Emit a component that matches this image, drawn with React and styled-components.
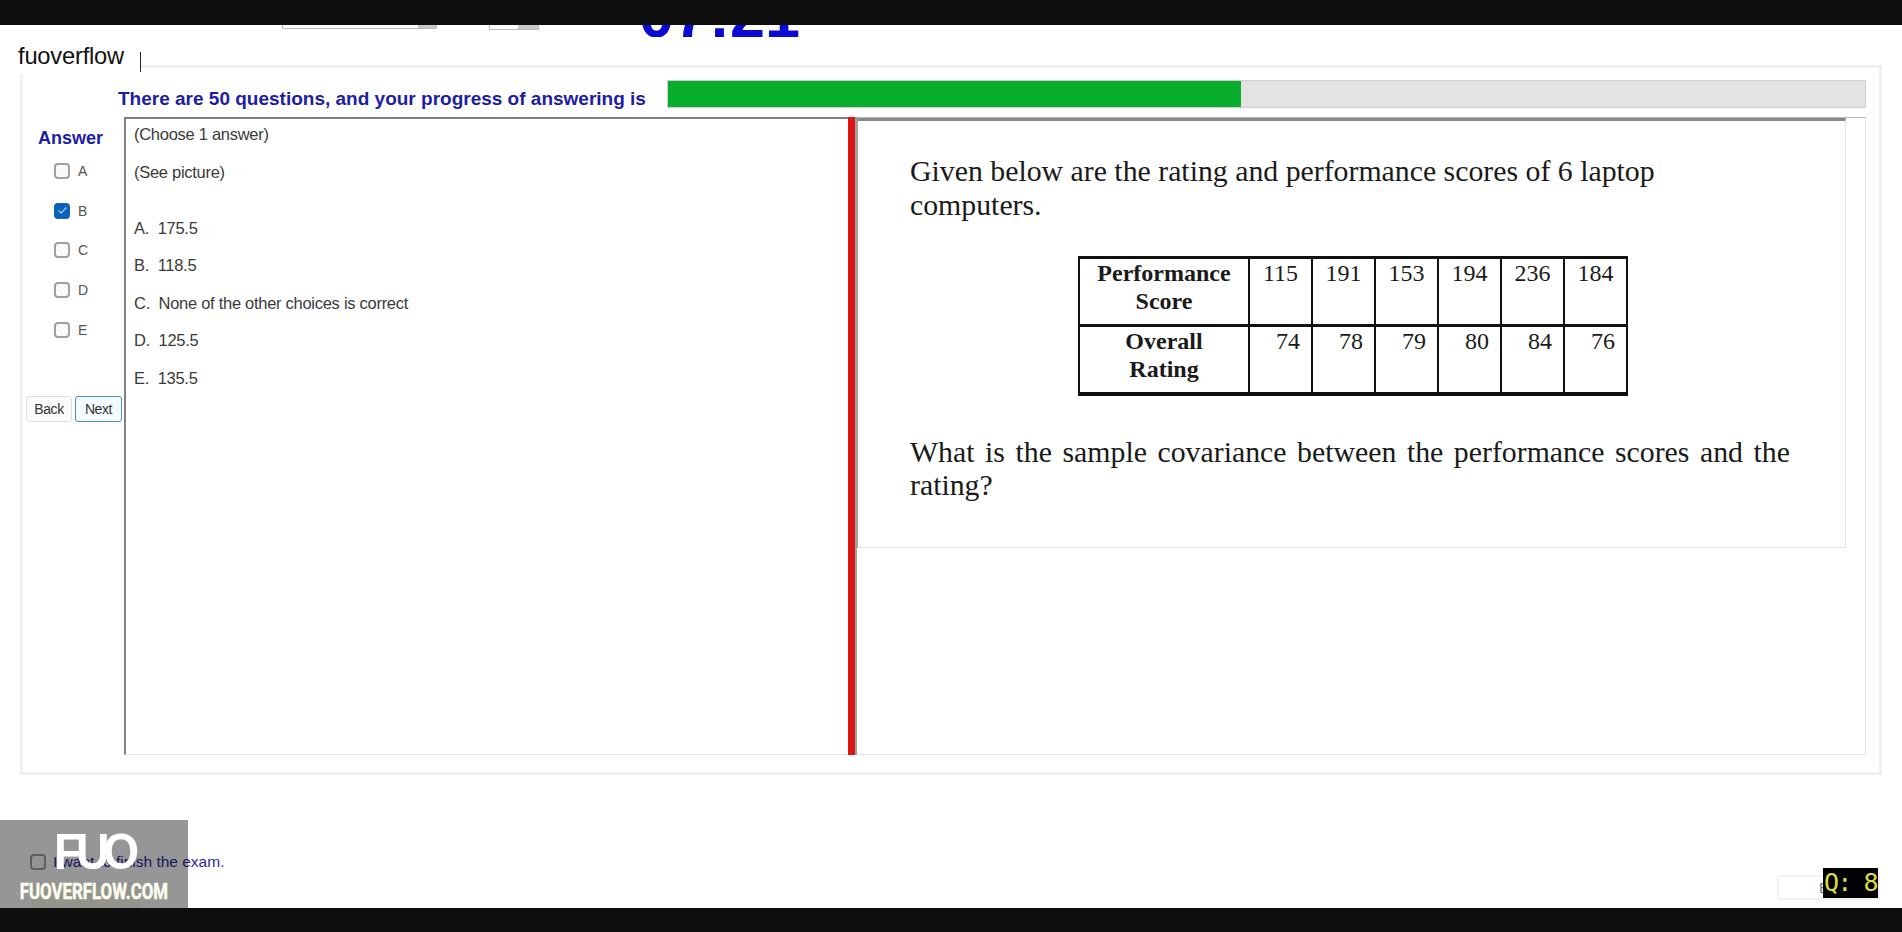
import styled, { createGlobalStyle } from "styled-components";

const Global = createGlobalStyle`
  html, body { margin: 0; padding: 0; background: #fff; }
  body { font-family: "Liberation Sans", Arial, sans-serif; }
`;

const Page = styled.div`
  position: relative;
  width: 1902px;
  height: 932px;
  overflow: hidden;
  display: flex;
  flex-direction: column;
  background: #fff;
`;

const BlackBar = styled.div`
  height: ${(p) => p.$h}px;
  background: #0e0e0e;
  flex-shrink: 0;
`;

const Header = styled.div`
  height: 40px;
  flex-shrink: 0;
  display: flex;
  align-items: flex-start;
  padding-left: 282px;
`;

const ClippedBox = styled.div`
  width: ${(p) => p.$w}px;
  height: ${(p) => p.$h}px;
  margin-right: ${(p) => p.$mr}px;
  box-sizing: border-box;
  border: 1px solid #bbb;
  border-top: none;
  display: flex;
  justify-content: flex-end;
`;

const ClippedArrow = styled.div`
  width: ${(p) => p.$w}px;
  height: 100%;
  background: #c9c9c9;
`;

const Timer = styled.div`
  height: 12px;
  display: flex;
  align-items: flex-end;
  overflow: hidden;
  font-size: 63px;
  line-height: 44px;
  font-weight: 700;
  color: #0a0ad2;
`;

const Frame = styled.div`
  width: 1862px;
  height: 710px;
  margin-left: 20px;
  box-sizing: border-box;
  border: 3px solid #f0f0f0;
  padding: 12px 13px 17px 0;
  display: flex;
  flex-direction: column;
  flex-shrink: 0;
`;

const ProgressRow = styled.div`
  height: 28px;
  display: flex;
  align-items: center;
  padding-left: 95px;
  margin-bottom: 9px;
`;

const ProgressLabel = styled.div`
  width: 549px;
  padding-top: 9px;
  font-size: 19px;
  font-weight: 700;
  color: #1c1ca6;
  white-space: nowrap;
`;

const ProgressTrack = styled.div`
  flex: 1;
  height: 28px;
  background: #e3e3e3;
  border: 1px solid #cfcfcf;
  box-sizing: border-box;
`;

const ProgressFill = styled.div`
  height: 100%;
  background: #08ae2c;
`;

const Body = styled.div`
  flex: 1;
  display: flex;
  min-height: 0;
`;

const AnswerColumn = styled.div`
  width: 101px;
  flex-shrink: 0;
  display: flex;
  flex-direction: column;
  padding-left: 3px;
  box-sizing: border-box;
`;

const AnswerTitle = styled.div`
  font-size: 18px;
  font-weight: 700;
  color: #1c1ca6;
  margin: 11px 0 0 12px;
  height: 35px;
  line-height: 20px;
`;

const Options = styled.div`
  display: flex;
  flex-direction: column;
  gap: 23.7px;
  margin-left: 28px;
`;

const Option = styled.div`
  display: flex;
  align-items: center;
  height: 16px;
  gap: 8px;
  font-size: 14px;
  color: #555;
`;

const Box = styled.span`
  width: 16px;
  height: 16px;
  box-sizing: border-box;
  border-radius: 4px;
  border: ${(p) => (p.$checked ? "none" : "2px solid #a0a0a0")};
  background: ${(p) => (p.$checked ? "#0b62b8" : "#fafafa")};
  display: flex;
  align-items: center;
  justify-content: center;
  flex-shrink: 0;
`;

const NavButtons = styled.div`
  display: flex;
  gap: 3px;
  margin-top: 58px;
`;

const NavButton = styled.div`
  width: ${(p) => p.$w}px;
  height: 26px;
  box-sizing: border-box;
  border: 1px solid ${(p) => (p.$active ? "#4a8fbe" : "#ddd")};
  border-radius: 3px;
  background: ${(p) => (p.$active ? "#f4fafe" : "#fbfbfb")};
  display: flex;
  align-items: center;
  justify-content: center;
  font-size: 14px;
  letter-spacing: -0.4px;
  color: #333;
`;

const QuestionPane = styled.div`
  width: 724px;
  flex-shrink: 0;
  box-sizing: border-box;
  border-left: 2px solid #808080;
  border-top: 2px solid #808080;
  border-bottom: 1px solid #e4e4e4;
  padding: 3px 8px;
`;

const QuestionLine = styled.div`
  height: ${(p) => p.$h || 37.4}px;
  line-height: 24px;
  font-size: 16.5px;
  letter-spacing: -0.28px;
  color: #3a3a3a;
  white-space: pre;
`;

const Splitter = styled.div`
  width: 9px;
  flex-shrink: 0;
  background: #dd1414;
  border-right: 2px solid #a0a0a0;
  box-sizing: border-box;
`;

const PicturePane = styled.div`
  flex: 1;
  min-width: 0;
  border-top: 1px solid #b5b5b5;
  border-right: 1px solid #e4e4e4;
  border-bottom: 1px solid #e4e4e4;
  box-sizing: border-box;
`;

const Picture = styled.div`
  width: 989px;
  height: 430px;
  box-sizing: border-box;
  border-top: 3px solid #8a8a8a;
  border-left: 1px solid #a5a5a5;
  border-right: 1px solid #e4e4e4;
  border-bottom: 1px solid #e4e4e4;
  padding: 33px 0 0 52px;
  font-family: "Liberation Serif", "Times New Roman", serif;
  font-size: 29.8px;
  line-height: 33.5px;
  color: #1a1a1a;
`;

const Paragraph = styled.p`
  margin: 0;
  width: ${(p) => p.$w}px;
  text-align: ${(p) => (p.$justify ? "justify" : "left")};
`;

const ScoreTable = styled.table`
  border-collapse: collapse;
  margin: 35px 0 0 168px;
  table-layout: fixed;
  width: 548px;
  border-top: 3px solid #111;
  border-bottom: 4px solid #111;
  line-height: 28px;
`;

const Th = styled.th`
  width: 170px;
  height: 68px;
  padding: 0;
  box-sizing: border-box;
  border: 2px solid #111;
  border-top: ${(p) => (p.$first ? "none" : "3px solid #111")};
  border-bottom: none;
  font-size: 24px;
  font-weight: 700;
  vertical-align: top;
`;

const Td = styled.td`
  width: 63px;
  padding: 0 ${(p) => (p.$right ? 11 : 0)}px 0 0;
  box-sizing: border-box;
  border: 2px solid #111;
  border-top: ${(p) => (p.$first ? "none" : "3px solid #111")};
  border-bottom: none;
  font-size: 24px;
  text-align: ${(p) => (p.$right ? "right" : "center")};
  vertical-align: top;
`;

const Footer = styled.div`
  flex: 1;
  min-height: 0;
  display: flex;
  justify-content: space-between;
  align-items: flex-end;
  padding: 0 22px 8px 30px;
`;

const FinishColumn = styled.div`
  display: flex;
  flex-direction: column;
  gap: 12px;
  margin-bottom: -8px;
`;

const FinishRow = styled.div`
  display: flex;
  align-items: center;
  gap: 7px;
  font-size: 15.5px;
  color: #2a2a9c;
`;

const FinishButton = styled.div`
  width: 105px;
  height: 24px;
  margin-left: 2px;
  border: 1px solid #eee;
  border-bottom: none;
  background: #fbfbef;
  border-radius: 3px 3px 0 0;
`;

const ExitButton = styled.div`
  width: 103px;
  height: 25px;
  box-sizing: border-box;
  border: 2px solid #f2f2f2;
  border-radius: 4px;
  font-size: 15px;
  color: #777;
  display: flex;
  align-items: center;
  padding-left: 40px;
`;

const NameTag = styled.div`
  position: absolute;
  left: 18px;
  top: 42px;
  width: 123px;
  height: 32px;
  background: #fff;
  font-size: 23.7px;
  line-height: 28px;
  letter-spacing: -0.2px;
  color: #111;
  white-space: nowrap;
`;

const Caret = styled.span`
  position: absolute;
  left: 122px;
  top: 10px;
  width: 1px;
  height: 20px;
  background: #222;
`;

const Watermark = styled.div`
  position: absolute;
  left: 0;
  top: 820px;
  width: 188px;
  height: 88px;
  background: rgba(0, 0, 0, 0.41);
  display: flex;
  flex-direction: column;
  align-items: center;
  color: #fff;
  font-weight: 700;
`;

const WatermarkLogo = styled.div`
  font-size: 50px;
  line-height: 42px;
  letter-spacing: -7px;
  margin-top: 11px;
  padding-right: 2px;
  transform: scaleX(0.93);
`;

const WatermarkSite = styled.div`
  font-family: "Liberation Sans Narrow", "Roboto", sans-serif;
  font-size: 22px;
  line-height: 24px;
  margin-top: 7px;
  color: #fdfdf0;
  transform: scaleX(0.765);
  -webkit-text-stroke: 0.5px #fdfdf0;
  white-space: nowrap;
`;

const QuestionBadge = styled.div`
  position: absolute;
  left: 1823px;
  top: 868px;
  width: 55px;
  height: 30px;
  padding-left: 1px;
  box-sizing: border-box;
  background: #000;
  color: #dcdc3c;
  font-family: "DejaVu Sans Mono", monospace;
  font-size: 25px;
  line-height: 30px;
  white-space: pre;
  letter-spacing: -1.9px;
`;

const options = ["A", "B", "C", "D", "E"];
const lines = [
  ["(Choose 1 answer)", 38],
  ["(See picture)", 56],
  ["A.  175.5"],
  ["B.  118.5"],
  ["C.  None of the other choices is correct"],
  ["D.  125.5"],
  ["E.  135.5"],
];
const scores = [115, 191, 153, 194, 236, 184];
const ratings = [74, 78, 79, 80, 84, 76];

const App = () => {
  return (
    <Page>
      <Global />
      <BlackBar $h={25} />
      <Header>
        <ClippedBox $w={155} $h={4} $mr={52}>
          <ClippedArrow $w={18} />
        </ClippedBox>
        <ClippedBox $w={50} $h={5} $mr={100}>
          <ClippedArrow $w={20} />
        </ClippedBox>
        <Timer>07:21</Timer>
      </Header>
      <Frame>
        <ProgressRow>
          <ProgressLabel>There are 50 questions, and your progress of answering is</ProgressLabel>
          <ProgressTrack>
            <ProgressFill style={{ width: `${(574 / 1199) * 100}%` }} />
          </ProgressTrack>
        </ProgressRow>
        <Body>
          <AnswerColumn>
            <AnswerTitle>Answer</AnswerTitle>
            <Options>
              {options.map((o) => (
                <Option key={o}>
                  <Box $checked={o === "B"}>
                    {o === "B" && (
                      <svg width="11" height="9" viewBox="0 0 11 9" fill="none">
                        <path d="M1.5 4.5 L4.2 7 L9.5 1.5" stroke="#9fc6ee" strokeWidth="1.4" />
                      </svg>
                    )}
                  </Box>
                  {o}
                </Option>
              ))}
            </Options>
            <NavButtons>
              <NavButton $w={46}>Back</NavButton>
              <NavButton $w={47} $active>Next</NavButton>
            </NavButtons>
          </AnswerColumn>
          <QuestionPane>
            {lines.map(([text, h]) => (
              <QuestionLine key={text} $h={h}>{text}</QuestionLine>
            ))}
          </QuestionPane>
          <Splitter />
          <PicturePane>
            <Picture>
              <Paragraph $w={800}>Given below are the rating and performance scores of 6 laptop computers.</Paragraph>
              <ScoreTable>
                <tbody>
                  <tr>
                    <Th $first>Performance<br />Score</Th>
                    {scores.map((s) => <Td key={s} $first>{s}</Td>)}
                  </tr>
                  <tr>
                    <Th>Overall<br />Rating</Th>
                    {ratings.map((r) => <Td key={r} $right>{r}</Td>)}
                  </tr>
                </tbody>
              </ScoreTable>
              <Paragraph $w={880} $justify style={{ marginTop: 39 }}>
                What is the sample covariance between the performance scores and the rating?
              </Paragraph>
            </Picture>
          </PicturePane>
        </Body>
      </Frame>
      <Footer>
        <FinishColumn>
          <FinishRow>
            <Box />
            I want to finish the exam.
          </FinishRow>
          <FinishButton />
        </FinishColumn>
        <ExitButton>E</ExitButton>
      </Footer>
      <BlackBar $h={24} />
      <NameTag>
        fuoverflow
        <Caret />
      </NameTag>
      <Watermark>
        <WatermarkLogo>FUO</WatermarkLogo>
        <WatermarkSite>FUOVERFLOW.COM</WatermarkSite>
      </Watermark>
      <QuestionBadge>Q: 8</QuestionBadge>
    </Page>
  );
};

export default App;
